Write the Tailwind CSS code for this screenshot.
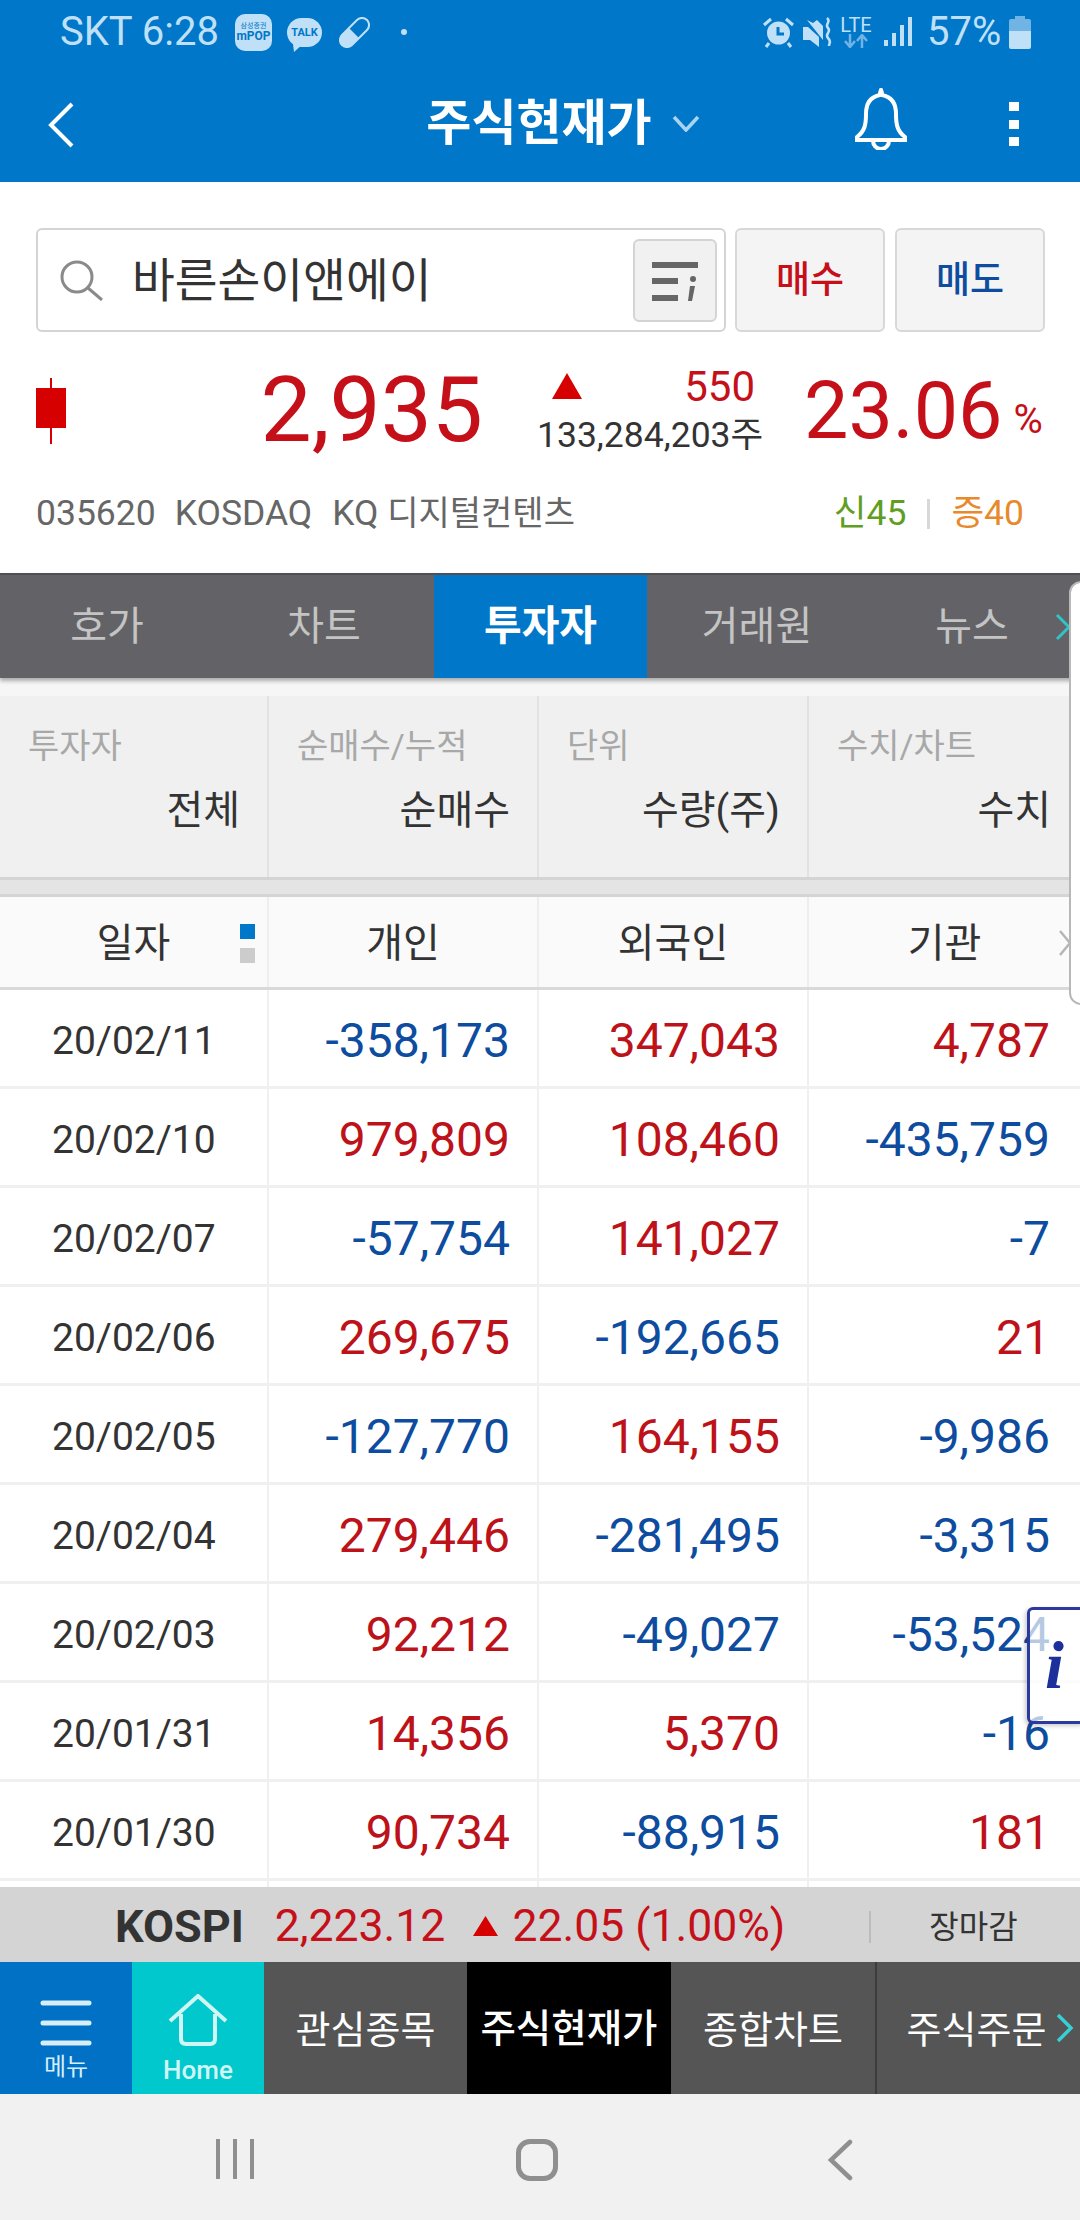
<!DOCTYPE html>
<html lang="ko">
<head>
  <meta charset="UTF-8">
  <title>주식현재가</title>
  <script src="https://cdn.jsdelivr.net/npm/@tailwindcss/browser@4"></script>
</head>
<body class="bg-white">
  <div class="relative w-[1080px] h-[2220px] overflow-hidden flex flex-col font-[family-name:Roboto,'Noto_Sans_CJK_KR',sans-serif] text-[#333]">

    <!-- status bar + title bar -->
    <header class="relative h-[182px] shrink-0 bg-[#0077c8] text-white">
      <div class="h-[64px] flex items-center text-[#bfe0f7] text-[40px] leading-none">
        <span class="ml-[60px] w-[175px] whitespace-nowrap">SKT 6:28</span>
        <div class="w-[37px] h-[37px] rounded-[10px] bg-[#bfe0f7] text-[#0077c8] flex flex-col items-center justify-center leading-none">
          <span class="text-[7px]">삼성증권</span>
          <span class="text-[12px] font-bold">mPOP</span>
        </div>
        <div class="relative ml-[15px] w-[35px] h-[29px] rounded-full bg-[#bfe0f7] text-[#0077c8] text-[11px] font-bold flex items-center justify-center">TALK
          <svg class="absolute left-[6px] top-[26px]" width="10" height="8" viewBox="0 0 10 8"><path d="M0 0h10L1 8z" fill="#bfe0f7"/></svg>
        </div>
        <svg class="ml-[17px]" width="31" height="31" viewBox="0 0 31 31"><path d="M3 18 18 3a7 7 0 0 1 10 10L13 28A7 7 0 0 1 3 18z" fill="none" stroke="#bfe0f7" stroke-width="2"/><path d="M3 18l7-7 10 10-7 7A7 7 0 0 1 3 18z" fill="#bfe0f7"/></svg>
        <span class="ml-[31px] w-[6px] h-[6px] rounded-full bg-[#bfe0f7]"></span>
        <svg class="ml-[355px]" width="33" height="32" viewBox="0 0 33 32"><circle cx="16.500" cy="17" r="11.500" fill="#bfe0f7"/><path d="M16 11v7h6" fill="none" stroke="#0077c8" stroke-width="3"/><path d="M2 9l7-6M31 9l-7-6M7 27l-3 4M26 27l3 4" stroke="#bfe0f7" stroke-width="3"/></svg>
        <svg class="ml-[6px]" width="32" height="32" viewBox="0 0 32 32"><path d="M2 11h5L18 21v10L9 24H2z M6 4l16 20V10L16 4l-4 3z" fill="#bfe0f7"/><path d="M26 2c5 4-3 6 1 10s-4 6 0 10 1 5 1 8" fill="none" stroke="#bfe0f7" stroke-width="2.500"/></svg>
        <div class="ml-[8px] w-[30px] flex flex-col items-center">
          <span class="text-[20px] leading-[17px]">LTE</span>
          <svg width="24" height="14" viewBox="0 0 24 14"><path d="M6 0v12M1 7l5 6 5-6M18 14V2M13 7l5-6 5 6" fill="none" stroke="#6fb4e4" stroke-width="2.500"/></svg>
        </div>
        <svg class="ml-[13px]" width="28" height="30" viewBox="0 0 28 30"><path d="M0 23h4v6H0zM8 16h4v13H8zM16 8h4v21h-4zM24 0h4v29h-4z" fill="#bfe0f7"/></svg>
        <span class="ml-[15px] w-[82px]">57%</span>
        <svg width="22" height="33" viewBox="0 0 22 33"><path d="M6 0h10v3h4a2 2 0 0 1 2 2v10H0V5a2 2 0 0 1 2-2h4z" fill="#6fb4e4"/><path d="M0 15h22v16a2 2 0 0 1-2 2H2a2 2 0 0 1-2-2z" fill="#bfe0f7"/></svg>
      </div>
      <div class="relative h-[118px] flex items-center justify-center">
        <svg class="absolute left-[48px] top-[38px]" width="26" height="46" viewBox="0 0 26 46"><path d="M24 2 3 23l21 21" fill="none" stroke="#fff" stroke-width="4"/></svg>
        <div class="flex items-center ml-[46px]">
          <span class="text-[49px] font-bold leading-none">주식현재가</span>
          <svg class="ml-[20px]" width="28" height="17" viewBox="0 0 28 17"><path d="M2 2l12 13L26 2" fill="none" stroke="#a8d4f0" stroke-width="3.500"/></svg>
        </div>
        <svg class="absolute left-[853px] top-[24px]" width="56" height="62" viewBox="0 0 56 62"><path d="M28 2c-1 2-1 4-1 5C16 9 13 17 13 26c0 10-1 17-9 23v3h48v-3c-8-6-9-13-9-23 0-9-3-17-14-19 0-1 0-3-1-5z" fill="none" stroke="#fff" stroke-width="4"/><path d="M20 53a8 8 0 0 0 16 0" fill="none" stroke="#fff" stroke-width="4"/></svg>
        <div class="absolute left-[1009px] top-[38px] w-[10px] h-[44px] flex flex-col justify-between">
          <span class="h-[9px] bg-white"></span><span class="h-[9px] bg-white"></span><span class="h-[9px] bg-white"></span>
        </div>
      </div>
    </header>

    <!-- stock summary -->
    <section class="h-[391px] shrink-0 bg-white">
      <div class="mt-[46px] ml-[36px] flex h-[104px]">
        <div class="relative w-[690px] border-2 border-[#d4d4d4] rounded-[6px] flex items-center">
          <svg class="ml-[20px]" width="48" height="42" viewBox="0 0 48 42"><circle cx="19" cy="18" r="15" fill="none" stroke="#8a8a8a" stroke-width="3"/><path d="M30 29l14 12" stroke="#8a8a8a" stroke-width="3"/></svg>
          <span class="ml-[26px] mt-[2px] text-[46.500px] leading-none text-[#333]">바른손이앤에이</span>
          <div class="absolute left-[595px] top-[9px] w-[84px] h-[83px] bg-[#f1f1f1] border-2 border-[#d4d4d4] rounded-[6px] flex items-center justify-center">
            <svg width="48" height="44" viewBox="0 0 48 44"><path d="M1 3h46v6H1zM1 19h26v6H1zM1 36h26v6H1z" fill="#666"/><circle cx="42" cy="20" r="3" fill="#666"/><path d="M39 27h5l-3 15h-4z" fill="#666"/></svg>
          </div>
        </div>
        <button class="ml-[9px] pt-[2px] w-[150px] bg-[#f4f4f4] border-2 border-[#d8d8d8] rounded-[6px] text-[37px] font-medium text-[#c5101a]">매수</button>
        <button class="ml-[10px] pt-[2px] w-[150px] bg-[#f4f4f4] border-2 border-[#d8d8d8] rounded-[6px] text-[37px] font-medium text-[#0d4c9e]">매도</button>
      </div>

      <div class="mt-[28px] h-[100px] flex items-center text-[#c5101a]">
        <svg class="ml-[36px] w-[30px] h-[66px] mb-[-2px]" viewBox="0 0 30 66"><path d="M14 0h2v66h-2z" fill="#d60000"/><path d="M0 10h30v40H0z" fill="#d60000"/></svg>
        <span class="w-[417px] text-right text-[91px] leading-none">2,935</span>
        <div class="ml-[54px] w-[223px] flex flex-col">
          <div class="h-[50px] flex items-center justify-between">
            <svg class="ml-[15px] mb-[2px]" width="30" height="26" viewBox="0 0 30 26"><path d="M15 0l15 26H0z" fill="#d60000"/></svg>
            <span class="mr-[5px] text-[42px] leading-none">550</span>
          </div>
          <span class="h-[46px] text-[35.500px] leading-[46px] text-[#333] whitespace-nowrap">133,284,203주</span>
        </div>
        <span class="ml-[44px] mt-[2px] text-[79px] leading-none">23.06</span>
        <span class="ml-[11px] mt-[20px] text-[40px] leading-none">%</span>
      </div>

      <div class="mt-[32px] ml-[36px] h-[44px] flex items-center text-[35.500px] leading-none text-[#666]">
        <span>035620</span>
        <span class="ml-[19px]">KOSDAQ</span>
        <span class="ml-[20px]">KQ <span class="text-[34px]">디지털컨텐츠</span></span>
        <span class="ml-auto text-[#5f9e1f]">신45</span>
        <span class="mx-[21px] w-[3px] h-[30px] bg-[#d8d8d8]"></span>
        <span class="mr-[56px] text-[#e88a2c]">증40</span>
      </div>
    </section>

    <!-- tabs -->
    <nav class="relative h-[105px] shrink-0 bg-[#636367] border-t-2 border-[#505054] flex items-center text-[40px] text-[#c4c4c4] leading-none shadow-[0_3px_4px_rgba(0,0,0,0.3)] z-10">
      <span class="w-[214px] text-center">호가</span>
      <span class="w-[220px] text-center">차트</span>
      <span class="w-[213px] h-full bg-[#0077c8] text-white text-[41px] font-bold flex items-center justify-center">투자자</span>
      <span class="w-[220px] text-center">거래원</span>
      <span class="w-[210px] text-center">뉴스</span>
      <svg class="absolute left-[1055px] top-[38px]" width="16" height="28" viewBox="0 0 16 28"><path d="M2 2l12 12L2 26" fill="none" stroke="#2fc4c8" stroke-width="3"/></svg>
    </nav>

    <div class="h-[18px] shrink-0 bg-[#f6f6f6]"></div>

    <!-- filters -->
    <section class="h-[181px] shrink-0 bg-[#f0f0f0] grid grid-cols-[269px_270px_270px_271px]">
      <div class="border-r-2 border-[#e2e2e2] pl-[28px] pr-[27px] pt-[28px] flex flex-col">
        <span class="text-[34px] leading-[44px] text-[#a8a8a8]">투자자</span>
        <span class="mt-[21px] text-right text-[40px] leading-[44px]">전체</span>
      </div>
      <div class="border-r-2 border-[#e2e2e2] pl-[28px] pr-[27px] pt-[28px] flex flex-col">
        <span class="text-[34px] leading-[44px] text-[#a8a8a8]">순매수/누적</span>
        <span class="mt-[21px] text-right text-[40px] leading-[44px]">순매수</span>
      </div>
      <div class="border-r-2 border-[#e2e2e2] pl-[28px] pr-[27px] pt-[28px] flex flex-col">
        <span class="text-[34px] leading-[44px] text-[#a8a8a8]">단위</span>
        <span class="mt-[21px] text-right text-[40px] leading-[44px]">수량(주)</span>
      </div>
      <div class="pl-[28px] pr-[29px] pt-[28px] flex flex-col">
        <span class="text-[34px] leading-[44px] text-[#a8a8a8]">수치/차트</span>
        <span class="mt-[21px] text-right text-[40px] leading-[44px]">수치</span>
      </div>
    </section>

    <div class="h-[20px] shrink-0 bg-[#e4e4e4] border-y-[3px] border-[#d4d4d4]"></div>

    <!-- column heads -->
    <div class="relative h-[93px] shrink-0 bg-[#fafafa] border-b-[3px] border-[#d9d9d9] grid grid-cols-[269px_270px_270px_271px] text-[40px] leading-none">
      <div class="relative border-r-2 border-[#eeeeee] flex items-center justify-center pt-[3px]"><span>일자</span>
        <span class="absolute left-[240px] top-[27px] w-[15px] h-[15px] bg-[#0077c8]"></span>
        <span class="absolute left-[240px] top-[51px] w-[15px] h-[15px] bg-[#cccccc]"></span>
      </div>
      <div class="border-r-2 border-[#eeeeee] flex items-center justify-center pt-[3px]">개인</div>
      <div class="border-r-2 border-[#eeeeee] flex items-center justify-center pt-[3px]">외국인</div>
      <div class="flex items-center justify-center pt-[3px]">기관</div>
      <svg class="absolute left-[1059px] top-[32px]" width="12" height="28" viewBox="0 0 12 28"><path d="M1 2l10 12L1 26" fill="none" stroke="#b5b5b5" stroke-width="2.500"/></svg>
    </div>

    <!-- rows -->
    <section class="flex-1 min-h-0 overflow-hidden text-[48px] leading-none">
      <div class="h-[99px] grid grid-cols-[269px_270px_270px_271px] border-b-[3px] border-[#f0f0f0]">
        <div class="border-r-2 border-[#f0f0f0] flex items-center pl-[52px] pt-[6px] text-[39px] text-[#333]">20/02/11</div>
        <div class="border-r-2 border-[#f0f0f0] flex items-center justify-end pr-[27px] pt-[6px] text-[#0d4c9e]">-358,173</div>
        <div class="border-r-2 border-[#f0f0f0] flex items-center justify-end pr-[27px] pt-[6px] text-[#bd1219]">347,043</div>
        <div class="flex items-center justify-end pr-[30px] pt-[6px] text-[#bd1219]">4,787</div>
      </div>
      <div class="h-[99px] grid grid-cols-[269px_270px_270px_271px] border-b-[3px] border-[#f0f0f0]">
        <div class="border-r-2 border-[#f0f0f0] flex items-center pl-[52px] pt-[6px] text-[39px] text-[#333]">20/02/10</div>
        <div class="border-r-2 border-[#f0f0f0] flex items-center justify-end pr-[27px] pt-[6px] text-[#bd1219]">979,809</div>
        <div class="border-r-2 border-[#f0f0f0] flex items-center justify-end pr-[27px] pt-[6px] text-[#bd1219]">108,460</div>
        <div class="flex items-center justify-end pr-[30px] pt-[6px] text-[#0d4c9e]">-435,759</div>
      </div>
      <div class="h-[99px] grid grid-cols-[269px_270px_270px_271px] border-b-[3px] border-[#f0f0f0]">
        <div class="border-r-2 border-[#f0f0f0] flex items-center pl-[52px] pt-[6px] text-[39px] text-[#333]">20/02/07</div>
        <div class="border-r-2 border-[#f0f0f0] flex items-center justify-end pr-[27px] pt-[6px] text-[#0d4c9e]">-57,754</div>
        <div class="border-r-2 border-[#f0f0f0] flex items-center justify-end pr-[27px] pt-[6px] text-[#bd1219]">141,027</div>
        <div class="flex items-center justify-end pr-[30px] pt-[6px] text-[#0d4c9e]">-7</div>
      </div>
      <div class="h-[99px] grid grid-cols-[269px_270px_270px_271px] border-b-[3px] border-[#f0f0f0]">
        <div class="border-r-2 border-[#f0f0f0] flex items-center pl-[52px] pt-[6px] text-[39px] text-[#333]">20/02/06</div>
        <div class="border-r-2 border-[#f0f0f0] flex items-center justify-end pr-[27px] pt-[6px] text-[#bd1219]">269,675</div>
        <div class="border-r-2 border-[#f0f0f0] flex items-center justify-end pr-[27px] pt-[6px] text-[#0d4c9e]">-192,665</div>
        <div class="flex items-center justify-end pr-[30px] pt-[6px] text-[#bd1219]">21</div>
      </div>
      <div class="h-[99px] grid grid-cols-[269px_270px_270px_271px] border-b-[3px] border-[#f0f0f0]">
        <div class="border-r-2 border-[#f0f0f0] flex items-center pl-[52px] pt-[6px] text-[39px] text-[#333]">20/02/05</div>
        <div class="border-r-2 border-[#f0f0f0] flex items-center justify-end pr-[27px] pt-[6px] text-[#0d4c9e]">-127,770</div>
        <div class="border-r-2 border-[#f0f0f0] flex items-center justify-end pr-[27px] pt-[6px] text-[#bd1219]">164,155</div>
        <div class="flex items-center justify-end pr-[30px] pt-[6px] text-[#0d4c9e]">-9,986</div>
      </div>
      <div class="h-[99px] grid grid-cols-[269px_270px_270px_271px] border-b-[3px] border-[#f0f0f0]">
        <div class="border-r-2 border-[#f0f0f0] flex items-center pl-[52px] pt-[6px] text-[39px] text-[#333]">20/02/04</div>
        <div class="border-r-2 border-[#f0f0f0] flex items-center justify-end pr-[27px] pt-[6px] text-[#bd1219]">279,446</div>
        <div class="border-r-2 border-[#f0f0f0] flex items-center justify-end pr-[27px] pt-[6px] text-[#0d4c9e]">-281,495</div>
        <div class="flex items-center justify-end pr-[30px] pt-[6px] text-[#0d4c9e]">-3,315</div>
      </div>
      <div class="h-[99px] grid grid-cols-[269px_270px_270px_271px] border-b-[3px] border-[#f0f0f0]">
        <div class="border-r-2 border-[#f0f0f0] flex items-center pl-[52px] pt-[6px] text-[39px] text-[#333]">20/02/03</div>
        <div class="border-r-2 border-[#f0f0f0] flex items-center justify-end pr-[27px] pt-[6px] text-[#bd1219]">92,212</div>
        <div class="border-r-2 border-[#f0f0f0] flex items-center justify-end pr-[27px] pt-[6px] text-[#0d4c9e]">-49,027</div>
        <div class="flex items-center justify-end pr-[30px] pt-[6px] text-[#0d4c9e]">-53,524</div>
      </div>
      <div class="h-[99px] grid grid-cols-[269px_270px_270px_271px] border-b-[3px] border-[#f0f0f0]">
        <div class="border-r-2 border-[#f0f0f0] flex items-center pl-[52px] pt-[6px] text-[39px] text-[#333]">20/01/31</div>
        <div class="border-r-2 border-[#f0f0f0] flex items-center justify-end pr-[27px] pt-[6px] text-[#bd1219]">14,356</div>
        <div class="border-r-2 border-[#f0f0f0] flex items-center justify-end pr-[27px] pt-[6px] text-[#bd1219]">5,370</div>
        <div class="flex items-center justify-end pr-[30px] pt-[6px] text-[#0d4c9e]">-16</div>
      </div>
      <div class="h-[99px] grid grid-cols-[269px_270px_270px_271px] border-b-[3px] border-[#f0f0f0]">
        <div class="border-r-2 border-[#f0f0f0] flex items-center pl-[52px] pt-[6px] text-[39px] text-[#333]">20/01/30</div>
        <div class="border-r-2 border-[#f0f0f0] flex items-center justify-end pr-[27px] pt-[6px] text-[#bd1219]">90,734</div>
        <div class="border-r-2 border-[#f0f0f0] flex items-center justify-end pr-[27px] pt-[6px] text-[#0d4c9e]">-88,915</div>
        <div class="flex items-center justify-end pr-[30px] pt-[6px] text-[#bd1219]">181</div>
      </div>
      <div class="h-[99px] grid grid-cols-[269px_270px_270px_271px]">
        <div class="border-r-2 border-[#f0f0f0]"></div>
        <div class="border-r-2 border-[#f0f0f0]"></div>
        <div class="border-r-2 border-[#f0f0f0]"></div>
        <div></div>
      </div>
    </section>

    <!-- index ticker -->
    <div class="h-[75px] shrink-0 bg-[#d4d4d4] flex items-center pt-[4px] text-[44.500px] leading-none text-[#c5101a] whitespace-nowrap">
      <span class="ml-[115px] font-bold text-[45px] text-[#333]">KOSPI</span>
      <span class="ml-[31px]">2,223.12</span>
      <svg class="ml-[28px] mt-[-2px]" width="25" height="20" viewBox="0 0 25 20"><path d="M12.500 0 25 20H0z" fill="#d60000"/></svg>
      <span class="ml-[14px]">22.05 (1.00%)</span>
      <span class="ml-[84px] w-[2px] h-[32px] bg-[#bcbcbc]"></span>
      <span class="ml-[58px] text-[32px] text-[#333]">장마감</span>
    </div>

    <!-- quick menu -->
    <nav class="h-[132px] shrink-0 flex text-[38px] leading-none text-white">
      <div class="w-[132px] bg-[#0071c5] flex flex-col items-center pt-[38px] text-[#d5eef9]">
        <svg width="52" height="46" viewBox="0 0 52 46"><path d="M3 3h46M3 23h46M3 43h46" stroke="#d5eef9" stroke-width="5" stroke-linecap="round"/></svg>
        <span class="mt-[9px] text-[24px]">메뉴</span>
      </div>
      <div class="w-[132px] bg-[#00c8cc] flex flex-col items-center pt-[32px] text-[#d0f5f5]">
        <svg width="60" height="52" viewBox="0 0 60 52"><path d="M2 27 30 2l28 25M13 20v25q0 5 5 5h24q5 0 5-5V20" fill="none" stroke="#d0f5f5" stroke-width="4"/></svg>
        <span class="mt-[11px] text-[26px] font-medium">Home</span>
      </div>
      <div class="w-[203px] bg-[#555555] flex items-center justify-center pt-[3px]">관심종목</div>
      <div class="w-[204px] bg-black font-medium text-[38.500px] flex items-center justify-center pt-[3px]">주식현재가</div>
      <div class="w-[204px] bg-[#555555] flex items-center justify-center pt-[3px]">종합차트</div>
      <div class="relative w-[205px] bg-[#555555] border-l-2 border-[#3c3c3c] flex items-center justify-center pt-[3px] pr-[4px]">주식주문
        <svg class="absolute left-[179px] top-[51px]" width="18" height="30" viewBox="0 0 18 30"><path d="M2 2l13 13L2 28" fill="none" stroke="#36d0d4" stroke-width="3.500"/></svg>
      </div>
    </nav>

    <!-- android navigation -->
    <div class="h-[126px] shrink-0 bg-[#f1f1f1] relative">
      <svg class="absolute left-[214px] top-[45px]" width="42" height="40" viewBox="0 0 42 40"><path d="M4 1v38M21 1v38M38 1v38" stroke="#8f8f8f" stroke-width="4" stroke-linecap="round"/></svg>
      <div class="absolute left-[516px] top-[45px] w-[42px] h-[42px] border-[5px] border-[#8f8f8f] rounded-[14px]"></div>
      <svg class="absolute left-[826px] top-[45px]" width="28" height="42" viewBox="0 0 28 42"><path d="M24 3 5 21l19 18" fill="none" stroke="#8f8f8f" stroke-width="4.500" stroke-linecap="round"/></svg>
    </div>

    <!-- drawer handle on the right edge -->
    <div class="absolute left-[1069px] top-[581px] w-[14px] h-[424px] bg-white border-2 border-[#b8b8b8] rounded-l-[12px] z-20"></div>

    <!-- floating info button -->
    <div class="absolute left-[1027px] top-[1607px] w-[60px] h-[117px] bg-white/70 border-[3px] border-[#2a3a9e] rounded-[6px] shadow-[-2px_2px_4px_rgba(0,0,0,0.2)] z-20 pl-[15px] pt-[21px]">
      <span class="font-[family-name:'Liberation_Serif',serif] font-bold italic text-[68px] leading-none text-[#1c2f9b]">i</span>
    </div>
  </div>
</body>
</html>
